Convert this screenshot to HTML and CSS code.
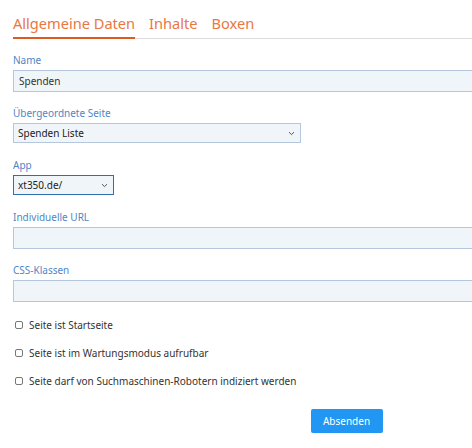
FILE: index.html
```html
<!DOCTYPE html>
<html lang="de">
<head>
<meta charset="utf-8">
<title>Seite bearbeiten</title>
<link rel="stylesheet" href="styles.css">
</head>
<body>
<div class="page">
  <nav class="tabs">
    <a class="tab active">Allgemeine Daten</a>
    <a class="tab">Inhalte</a>
    <a class="tab">Boxen</a>
  </nav>
  <form class="form">
    <div class="group">
      <label class="label">Name</label>
      <input class="input" type="text" value="Spenden">
    </div>
    <div class="group group-select">
      <label class="label">Übergeordnete Seite</label>
      <select class="select select-wide"><option>Spenden Liste</option></select>
    </div>
    <div class="group group-select">
      <label class="label">App</label>
      <select class="select select-small focus"><option>xt350.de/</option></select>
    </div>
    <div class="group">
      <label class="label">Individuelle URL</label>
      <input class="input" type="text" value="">
    </div>
    <div class="group">
      <label class="label">CSS-Klassen</label>
      <input class="input" type="text" value="">
    </div>
    <div class="checks">
      <label class="check"><input type="checkbox" class="box"><span>Seite ist Startseite</span></label>
      <label class="check"><input type="checkbox" class="box"><span>Seite ist im Wartungsmodus aufrufbar</span></label>
      <label class="check"><input type="checkbox" class="box"><span>Seite darf von Suchmaschinen-Robotern indiziert werden</span></label>
    </div>
    <div class="actions">
      <button type="button" class="btn">Absenden</button>
    </div>
  </form>
</div>
</body>
</html>
```
FILE: styles.css
```css
html, body {
  margin: 0;
  padding: 0;
  overflow: hidden;
  background: #fff;
}
body {
  font-family: "Noto Sans", "Open Sans", sans-serif;
  font-size: 10px;
  color: #333;
}
.page {
  padding: 10px 0 0 13px;
  width: 667px;
}
.tabs {
  display: flex;
  gap: 14px;
  border-bottom: 1px solid #dcdcdc;
}
.tab {
  font-size: 14.6px;
  line-height: 26px;
  color: #e9773f;
  padding-bottom: 1px;
  border-bottom: 2px solid transparent;
  margin-bottom: -1px;
}
.tab.active {
  border-bottom-color: #de5a1f;
}
.form {
  display: flex;
  flex-direction: column;
  padding-top: 13px;
}
.group {
  display: flex;
  flex-direction: column;
  margin-bottom: 13px;
}
.group-select {
  margin-bottom: 14px;
}
.label {
  color: #4f86c6;
  line-height: 16px;
  margin-bottom: 2px;
}
.input {
  box-sizing: border-box;
  height: 22px;
  width: 100%;
  border: 1px solid #b4c7dc;
  background: #f0f5fa;
  font: inherit;
  color: #333;
  padding: 0 5px;
  margin: 0;
}
.select {
  box-sizing: border-box;
  height: 20px;
  appearance: none;
  -webkit-appearance: none;
  border: 1px solid #b4c7dc;
  background: #f0f5fa url("data:image/svg+xml;utf8,<svg xmlns='http://www.w3.org/2000/svg' width='7' height='5' viewBox='0 0 7 5'><path d='M1 1.2 L3.5 3.6 L6 1.2' fill='none' stroke='%23555' stroke-width='1'/></svg>") no-repeat right 5px center;
  font: inherit;
  color: #222;
  padding: 0 4px;
  margin: 0;
  border-radius: 0;
}
.select-wide { width: 288px; }
.select-small { width: 101px; padding-left: 4px; }
.select.focus { border-color: #2f6fad; }
.checks {
  display: flex;
  flex-direction: column;
  gap: 12px;
  padding-top: 2px;
}
.check {
  display: flex;
  align-items: center;
  gap: 6px;
  height: 16px;
  padding-left: 2px;
  line-height: 16px;
}
.box {
  appearance: none;
  -webkit-appearance: none;
  width: 8px;
  height: 8px;
  margin: 0;
  border: 1px solid #777;
  border-radius: 2px;
  background: #fff;
  box-sizing: border-box;
}
.actions {
  display: flex;
  justify-content: center;
  padding-top: 20px;
}
.btn {
  width: 72px;
  height: 24px;
  background: #2196f3;
  color: #fff;
  border: none;
  border-radius: 2px;
  font: inherit;
  font-size: 10px;
  padding: 0;
}
```
